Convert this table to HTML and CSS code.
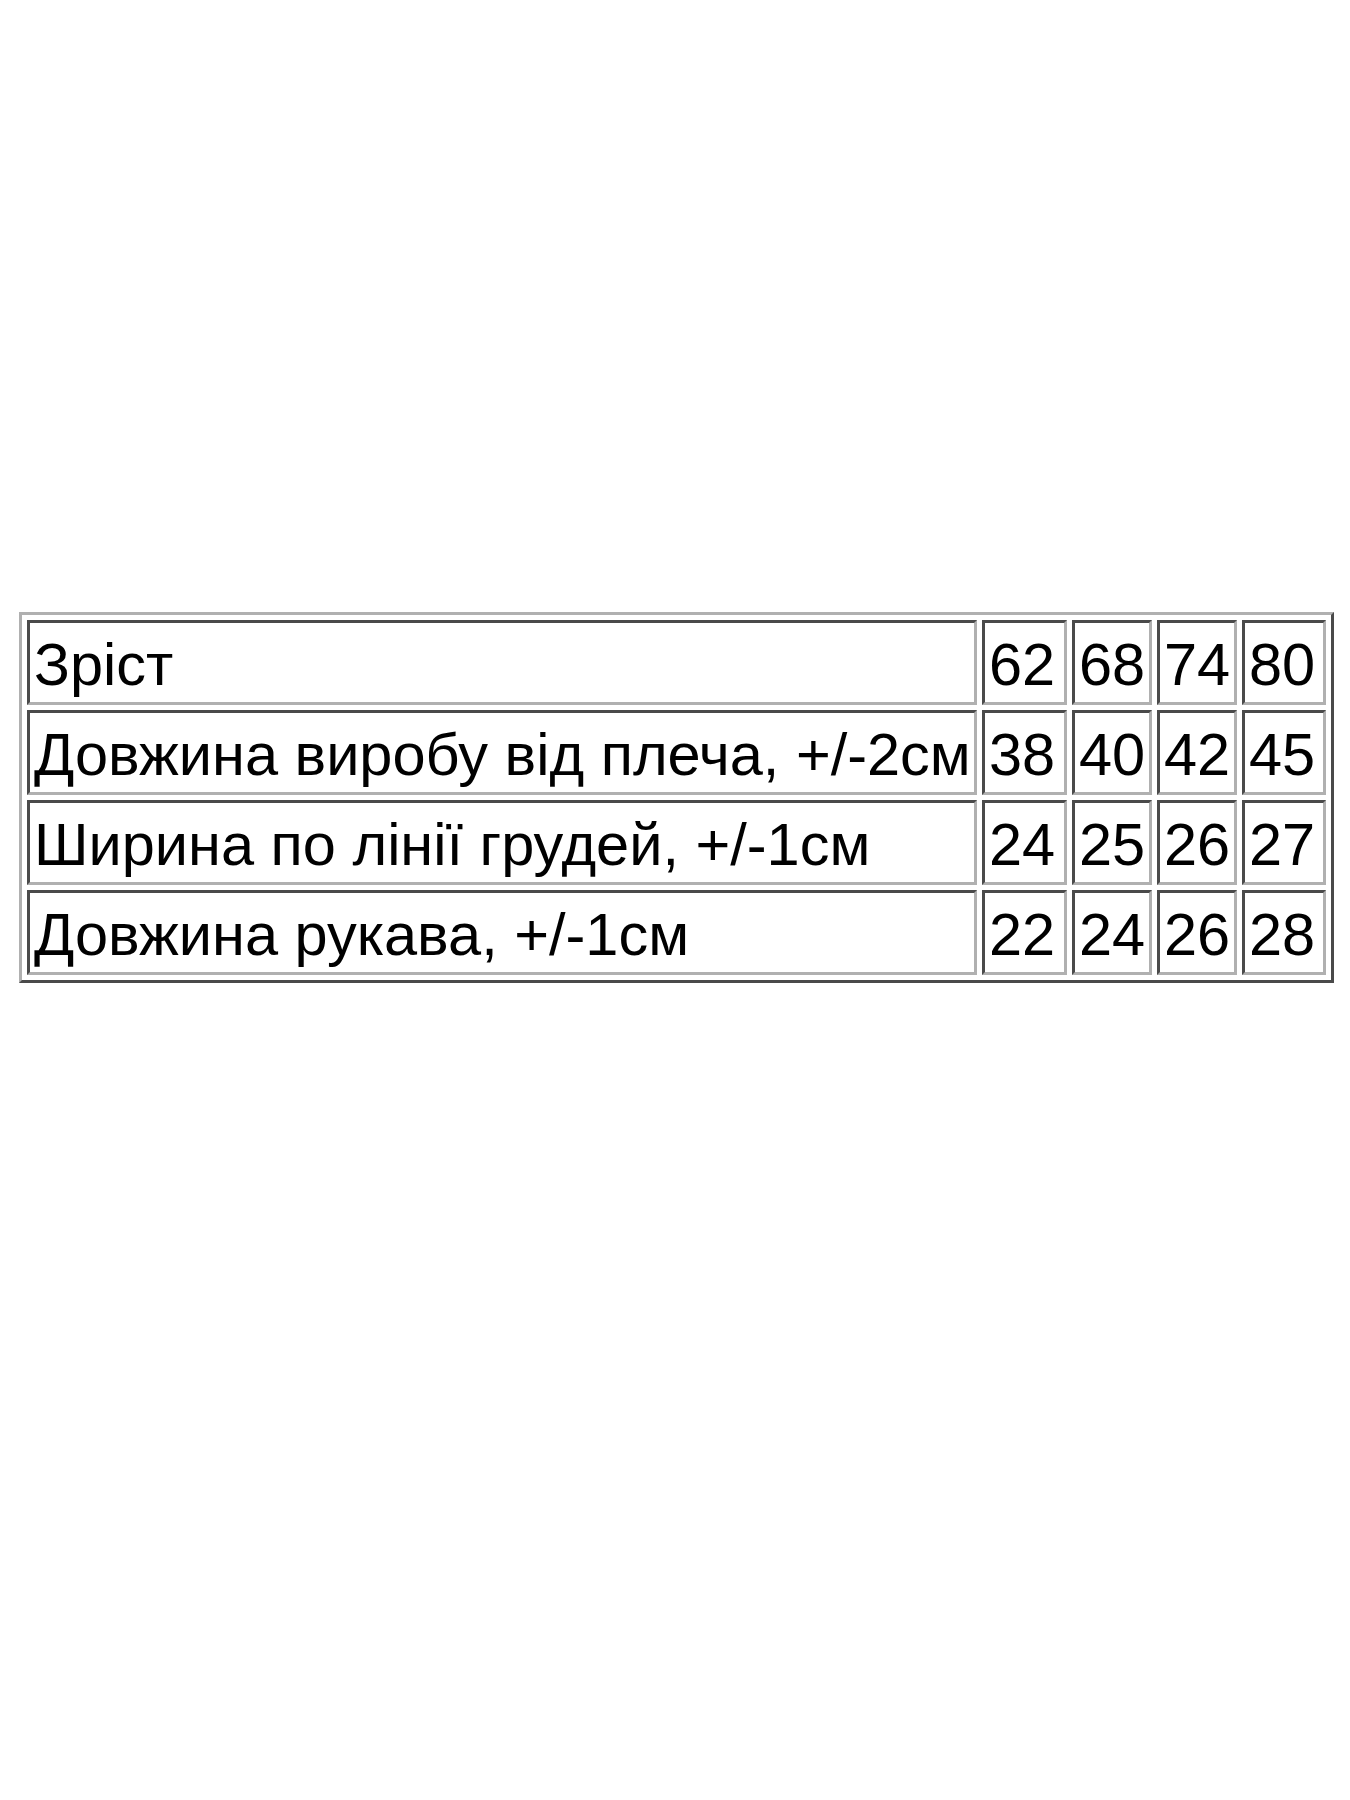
FILE: index.html
```html
<!DOCTYPE html>
<html lang="uk">
<head>
<meta charset="utf-8">
<title>Розмірна сітка</title>
<link rel="stylesheet" href="styles.css">
</head>
<body>
<div class="page">
  <table class="sizes">
    <colgroup>
      <col class="c-label">
      <col class="c-62">
      <col class="c-68">
      <col class="c-74">
      <col class="c-80">
    </colgroup>
    <tbody>
      <tr><td>Зріст</td><td>62</td><td>68</td><td>74</td><td>80</td></tr>
      <tr><td>Довжина виробу від плеча, +/-2см</td><td>38</td><td>40</td><td>42</td><td>45</td></tr>
      <tr><td>Ширина по лінії грудей, +/-1см</td><td>24</td><td>25</td><td>26</td><td>27</td></tr>
      <tr><td>Довжина рукава, +/-1см</td><td>22</td><td>24</td><td>26</td><td>28</td></tr>
    </tbody>
  </table>
</div>
</body>
</html>
```

FILE: styles.css
```css
html, body {
  margin: 0;
  padding: 0;
  background: #ffffff;
}

.page {
  width: 1350px;
  height: 1800px;
  padding: 612px 0 0 19px;
  box-sizing: border-box;
}

.sizes {
  width: 1315px;
  table-layout: fixed;
  border-collapse: separate;
  border-spacing: 5px;
  border-style: solid;
  border-width: 3px;
  border-color: #b0b0b0 #4a4a4a #4a4a4a #b0b0b0;
  font-family: "Liberation Sans", Arial, sans-serif;
  font-size: 59.5px;
  color: #000000;
}

.c-label { width: 950px; }
.c-62 { width: 85px; }
.c-68 { width: 80px; }
.c-74 { width: 80px; }
.c-80 { width: 84px; }

.sizes td {
  height: 85px;
  box-sizing: border-box;
  padding: 4px 3px 0 4px;
  border-style: solid;
  border-width: 3px;
  border-color: #4a4a4a #b0b0b0 #b0b0b0 #4a4a4a;
  vertical-align: middle;
  white-space: nowrap;
  overflow: hidden;
  line-height: 1;
}
```
